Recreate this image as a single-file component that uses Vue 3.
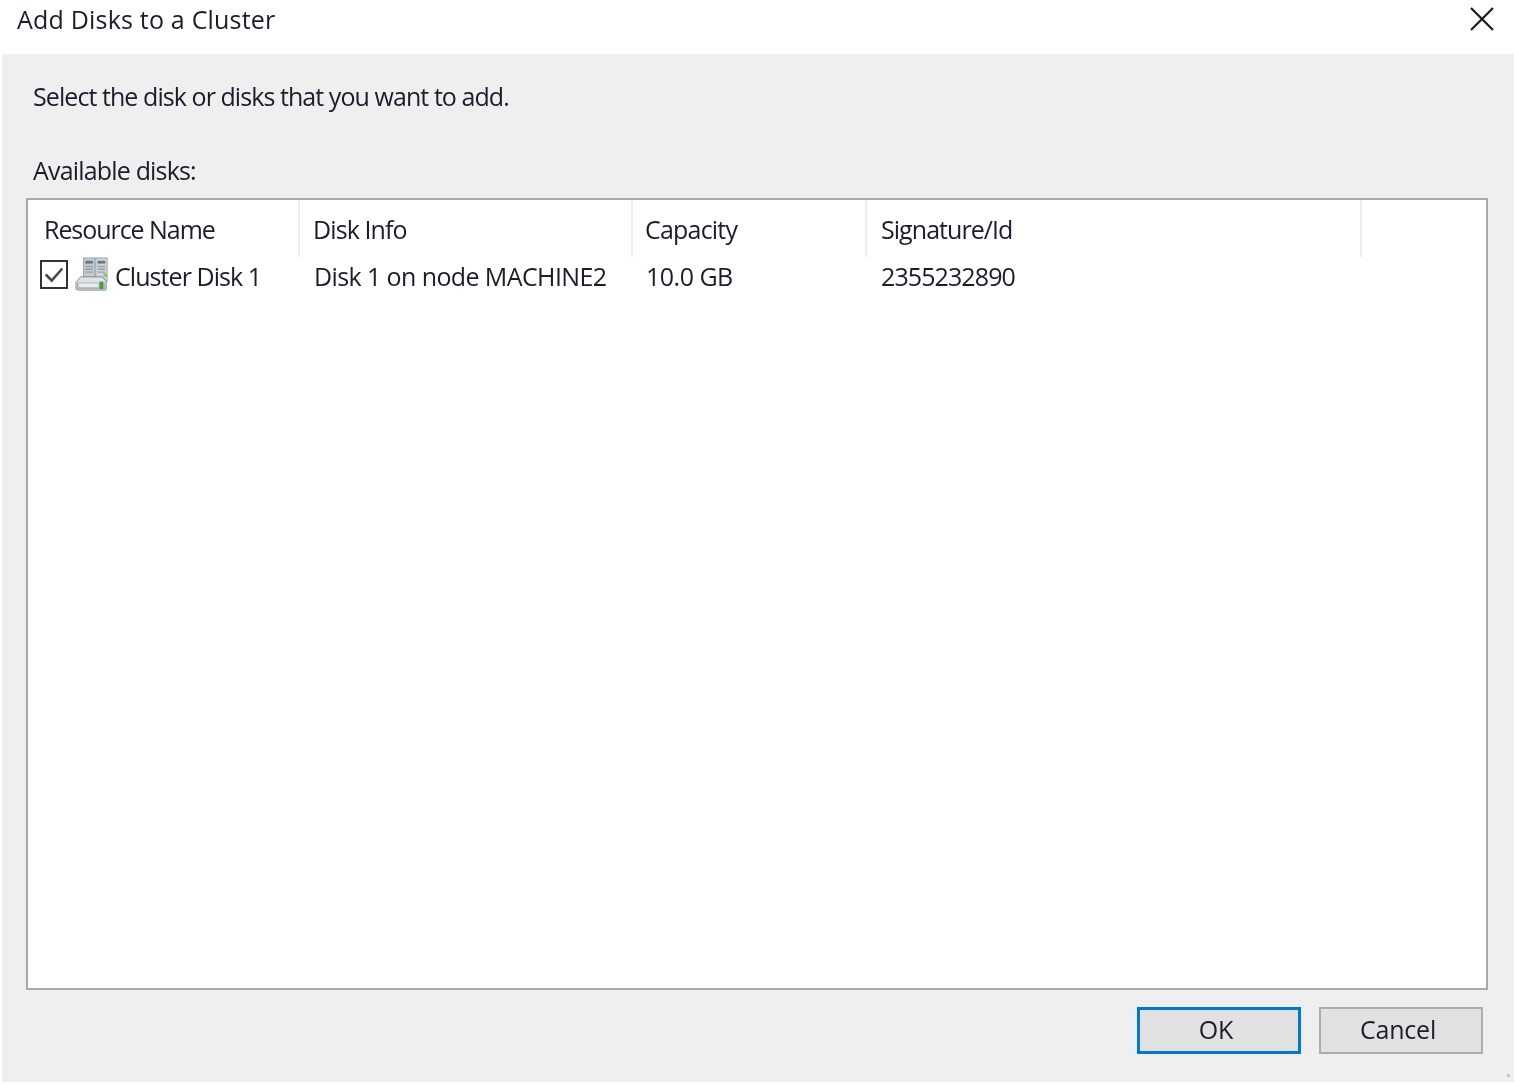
<script setup>
const columns = [
  { title: 'Resource Name', width: 272, pad: 16, ls: -1.05 },
  { title: 'Disk Info', width: 333, pad: 13, ls: -0.9 },
  { title: 'Capacity', width: 234, pad: 12, ls: -0.8 },
  { title: 'Signature/Id', width: 495, pad: 14, ls: -0.95 }
]
</script>

<template>
  <div class="dialog">
    <header class="titlebar">
      <span class="title">Add Disks to a Cluster</span>
      <svg class="close" width="26" height="26" viewBox="0 0 26 26">
        <path d="M2 2 L24 24 M24 2 L2 24" stroke="#1a1a1a" stroke-width="2.2" fill="none" />
      </svg>
    </header>
    <main class="panel">
      <p class="prompt">Select the disk or disks that you want to add.</p>
      <p class="label">Available disks:</p>
      <section class="list">
        <div class="head">
          <div
            v-for="c in columns"
            :key="c.title"
            class="hcell"
            :style="{ width: c.width + 'px', paddingLeft: c.pad + 'px', letterSpacing: c.ls + 'px' }"
          >{{ c.title }}</div>
        </div>
        <div class="row">
          <div class="cell first">
            <span class="check">
              <svg width="25" height="25" viewBox="0 0 26 26">
                <path d="M4 13 L10.5 19.5 L22 6.5" stroke="#4a4a4a" stroke-width="2.8" fill="none" />
              </svg>
            </span>
            <svg class="disk" width="34" height="34" viewBox="0 0 36 36">
              <rect x="9" y="1" width="12" height="25" fill="#c3ccd3" stroke="#98a2a9" />
              <rect x="22" y="1" width="12" height="25" fill="#cfd6db" stroke="#98a2a9" />
              <rect x="11" y="4" width="8" height="3" fill="#6a7883" />
              <rect x="24" y="4" width="8" height="3" fill="#6a7883" />
              <path d="M11 10h8M11 13h8M11 16h8M24 10h8M24 13h8M24 16h8" stroke="#97a2aa" stroke-width="1.5" />
              <circle cx="32" cy="19" r="2" fill="#8ccb55" />
              <path d="M6 21 L29 21 L33 26 L33 34 Q33 35 32 35 L3 35 Q1 35 1 33 L1 27 Z" fill="#dfe3e6" stroke="#7d8790" />
              <rect x="2" y="27" width="30" height="7" fill="#aeb6bc" />
              <rect x="4" y="28" width="21" height="4" fill="#e9ecee" />
              <rect x="26" y="26" width="4" height="8" fill="#3fa43a" />
            </svg>
            <span class="name">Cluster Disk 1</span>
          </div>
          <div class="cell info">Disk 1 on node MACHINE2</div>
          <div class="cell cap">10.0 GB</div>
          <div class="cell sig">2355232890</div>
        </div>
      </section>
      <footer class="actions">
        <button class="btn primary">OK</button>
        <button class="btn">Cancel</button>
      </footer>
      <span class="grip"></span>
    </main>
  </div>
</template>

<style>
html, body { margin: 0; background: #fff; }
</style>

<style scoped>
.dialog {
  width: 1516px;
  height: 1085px;
  display: flex;
  flex-direction: column;
  background: #fff;
  color: #1c1c2c;
  font-family: "Open Sans", "Noto Sans", sans-serif;
  font-size: 25px;
  overflow: hidden;
  filter: blur(0.55px);
}
.titlebar {
  height: 54px;
  flex: none;
  display: flex;
  justify-content: space-between;
  padding: 4px 21px 0 17px;
  box-sizing: border-box;
}
.title { font-size: 25px; line-height: 30px; letter-spacing: 0.2px; }
.close { margin-top: 2px; }
.panel {
  position: relative;
  flex: none;
  height: 1028px;
  margin: 0 2px;
  width: 1512px;
  background: #efefef;
  padding: 0 26px 0 24px;
  box-sizing: border-box;
  display: flex;
  flex-direction: column;
}
.prompt, .label { margin: 0; padding-left: 7px; line-height: 30px; }
.prompt { margin-top: 27px; letter-spacing: -0.93px; }
.label { margin-top: 44px; letter-spacing: -0.82px; }
.list {
  margin-top: 13px;
  height: 792px;
  box-sizing: border-box;
  background: #fff;
  border: 2px solid #a6a9ae;
}
.head { display: flex; height: 57px; }
.hcell {
  box-sizing: border-box;
  border-right: 2px solid #eeeeee;
  line-height: 58px;
}
.row { display: flex; height: 38px; align-items: center; }
.cell { box-sizing: border-box; white-space: nowrap; letter-spacing: -0.6px; }
.first { width: 272px; padding-left: 12px; display: flex; align-items: center; }
.check {
  width: 28px;
  height: 29px;
  box-sizing: border-box;
  border: 2px solid #333;
  flex: none;
  display: flex;
  background: #fff;
  margin-bottom: 3px;
}
.disk { margin-left: 7px; margin-bottom: 4px; flex: none; }
.name { margin-left: 6px; letter-spacing: -0.93px; }
.info { width: 333px; padding-left: 14px; }
.cap { width: 234px; padding-left: 13px; letter-spacing: -0.5px; }
.sig { padding-left: 14px; letter-spacing: -0.9px; }
.actions {
  display: flex;
  justify-content: flex-end;
  gap: 18px;
  margin-top: 17px;
  padding-right: 5px;
}
.btn {
  width: 164px;
  height: 47px;
  box-sizing: border-box;
  background: #e1e1e1;
  border: 2px solid #adadad;
  font: inherit;
  color: inherit;
  letter-spacing: -0.2px;
  padding: 0 6px 3px 0;
}
.primary { border: 3px solid #0078d7; }
.grip {
  position: absolute;
  right: 4px;
  bottom: 5px;
  width: 3px;
  height: 3px;
  background: #c4c4c4;
}
</style>
